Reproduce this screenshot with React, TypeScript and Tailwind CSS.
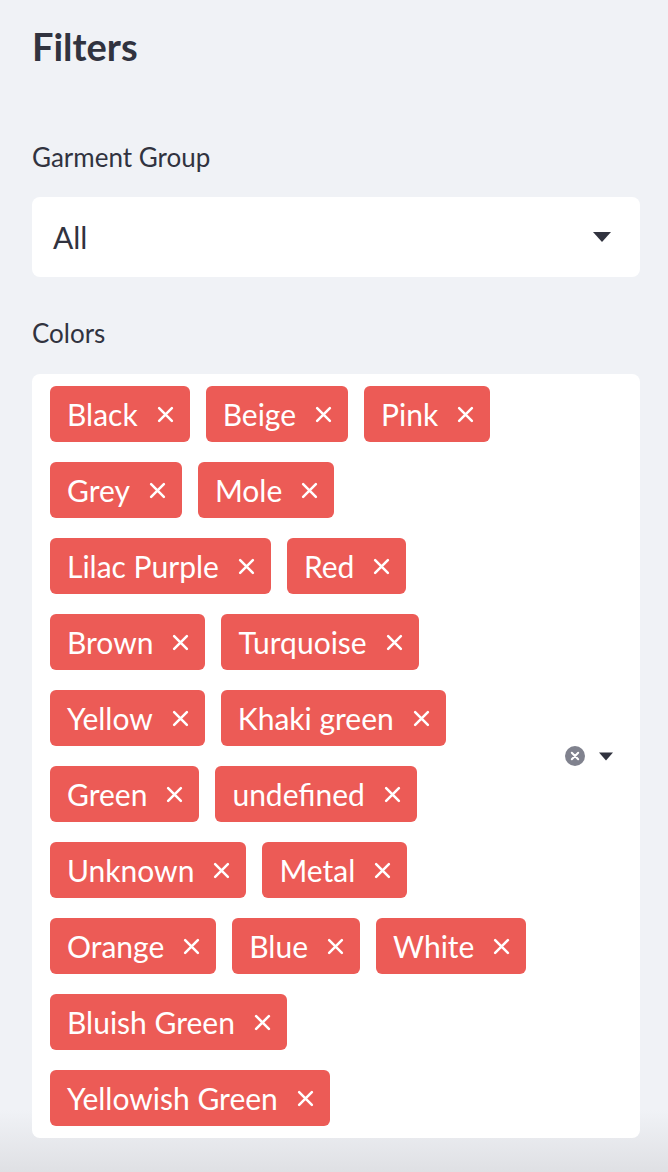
import React from "react";

const colors = [
  "Black",
  "Beige",
  "Pink",
  "Grey",
  "Mole",
  "Lilac Purple",
  "Red",
  "Brown",
  "Turquoise",
  "Yellow",
  "Khaki green",
  "Green",
  "undefined",
  "Unknown",
  "Metal",
  "Orange",
  "Blue",
  "White",
  "Bluish Green",
  "Yellowish Green",
];

function Caret({ className }: { className?: string }) {
  return (
    <svg viewBox="0 0 18 10" className={className} fill="#31333f">
      <path d="M0 0h18L9 10z" />
    </svg>
  );
}

function Tag({ label }: { label: string }) {
  return (
    <span className="flex h-[56px] items-center rounded-[6px] bg-[#ec5b56] pl-[17px] pr-[16px] text-[30px] leading-none text-white">
      <span>{label}</span>
      <svg viewBox="0 0 16 16" className="ml-[19px] h-[17px] w-[17px]" stroke="white" strokeWidth="2.4" strokeLinecap="round">
        <path d="M2 2l12 12M14 2L2 14" />
      </svg>
    </span>
  );
}

export default function App() {
  return (
    <div
      className="flex h-[1172px] w-[668px] flex-col bg-[linear-gradient(to_bottom,#f0f2f6_1110px,#dfe0e4_1172px)] pl-[32px] pr-[28px] pt-[22px] text-[#31333f]"
      style={{ fontFamily: "Lato, 'Noto Sans', sans-serif" }}
    >
      {/* Heading */}
      <h1 className="text-[38px] font-bold leading-[48px]">Filters</h1>

      {/* Garment group select */}
      <label className="mt-[71px] text-[26px] leading-[32px]">Garment Group</label>
      <div className="mt-[24px] flex h-[80px] items-center justify-between rounded-[8px] bg-white pl-[21px] pr-[29px]">
        <span className="text-[30px]">All</span>
        <Caret className="h-[10px] w-[18px]" />
      </div>

      {/* Colors multiselect */}
      <label className="mt-[40px] text-[26px] leading-[32px]">Colors</label>
      <div className="mt-[25px] flex items-center rounded-[8px] bg-white pb-[12px] pl-[18px] pr-[27px] pt-[12px]">
        <div className="flex w-[496px] flex-wrap gap-x-[16px] gap-y-[20px]">
          {colors.map((c) => (
            <Tag key={c} label={c} />
          ))}
        </div>
        <div className="ml-auto flex items-center gap-[14px]">
          <svg viewBox="0 0 20 20" className="h-[20px] w-[20px]">
            <circle cx="10" cy="10" r="10" fill="#80828e" />
            <path d="M6.8 6.8l6.4 6.4M13.2 6.8l-6.4 6.4" stroke="white" strokeWidth="2" strokeLinecap="round" />
          </svg>
          <Caret className="h-[9px] w-[14px]" />
        </div>
      </div>
    </div>
  );
}
